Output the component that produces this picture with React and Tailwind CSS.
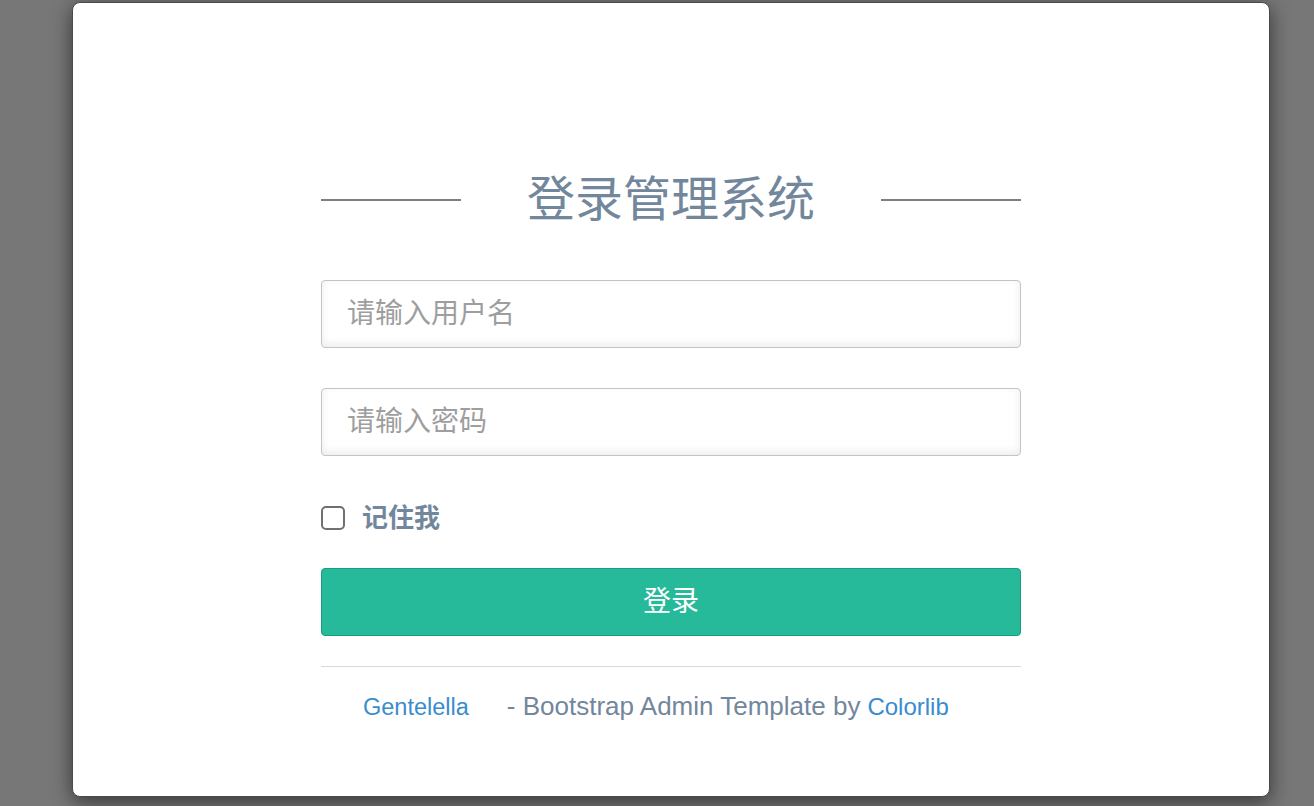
export default function App() {
  const cjk = { fontFamily: '"Liberation Sans", "Noto Sans CJK SC", sans-serif' };
  return (
    <div className="w-full h-[806px] bg-[#777777] flex pt-[2px] overflow-hidden" style={cjk}>
      <div className="ml-[72px] w-[1198px] h-[795px] bg-white rounded-[8px] border border-[#4a4a4a] shadow-[0_5px_20px_rgba(0,0,0,0.55)]">
        <div className="w-[700px] pt-[167px] ml-[248px]">
          <div className="flex items-center justify-between h-[60px]">
            <div className="w-[140px] h-[2px] bg-[#7f7f7f]" />
            <h1 className="text-[48px] leading-[60px] text-[#73879C] font-normal">登录管理系统</h1>
            <div className="w-[140px] h-[2px] bg-[#7f7f7f]" />
          </div>
          <input
            className="mt-[50px] block w-full h-[68px] border border-[#c4c4c4] rounded-[4px] pl-[25px] text-[28px] text-[#555] placeholder:text-[#9e9e9e] outline-none shadow-[inset_0_-3px_8px_rgba(0,0,0,0.08),0_1px_0_#fff]"
            placeholder="请输入用户名"
          />
          <input
            type="password"
            className="mt-[40px] block w-full h-[68px] border border-[#c4c4c4] rounded-[4px] pl-[25px] text-[28px] text-[#555] placeholder:text-[#9e9e9e] outline-none shadow-[inset_0_-3px_8px_rgba(0,0,0,0.08),0_1px_0_#fff]"
            placeholder="请输入密码"
          />
          <label className="mt-[48px] flex items-center h-[28px]">
            <span className="w-[24px] h-[24px] border-2 border-[#707070] rounded-[5px] bg-white" />
            <span className="ml-[17px] text-[26px] font-bold text-[#73879C] leading-[28px]">记住我</span>
          </label>
          <button className="mt-[36px] w-full h-[68px] bg-[#26B99A] border border-[#169F85] rounded-[4px] text-white text-[28px]">
            登录
          </button>
          <div className="mt-[30px] h-px bg-[#d8d8d8]" />
          <div className="mt-[25px] leading-[28px] text-[#73879C] pl-[42px] flex items-baseline" style={{ fontFamily: '"Liberation Sans", Arial, sans-serif' }}>
            <a className="text-[#3a8cce] text-[23.5px]">Gentelella</a>
            <span className="ml-[38px] text-[26px]">- Bootstrap Admin Template by</span>
            <a className="ml-[7px] text-[#3a8cce] text-[24px]">Colorlib</a>
          </div>
        </div>
      </div>
    </div>
  );
}
